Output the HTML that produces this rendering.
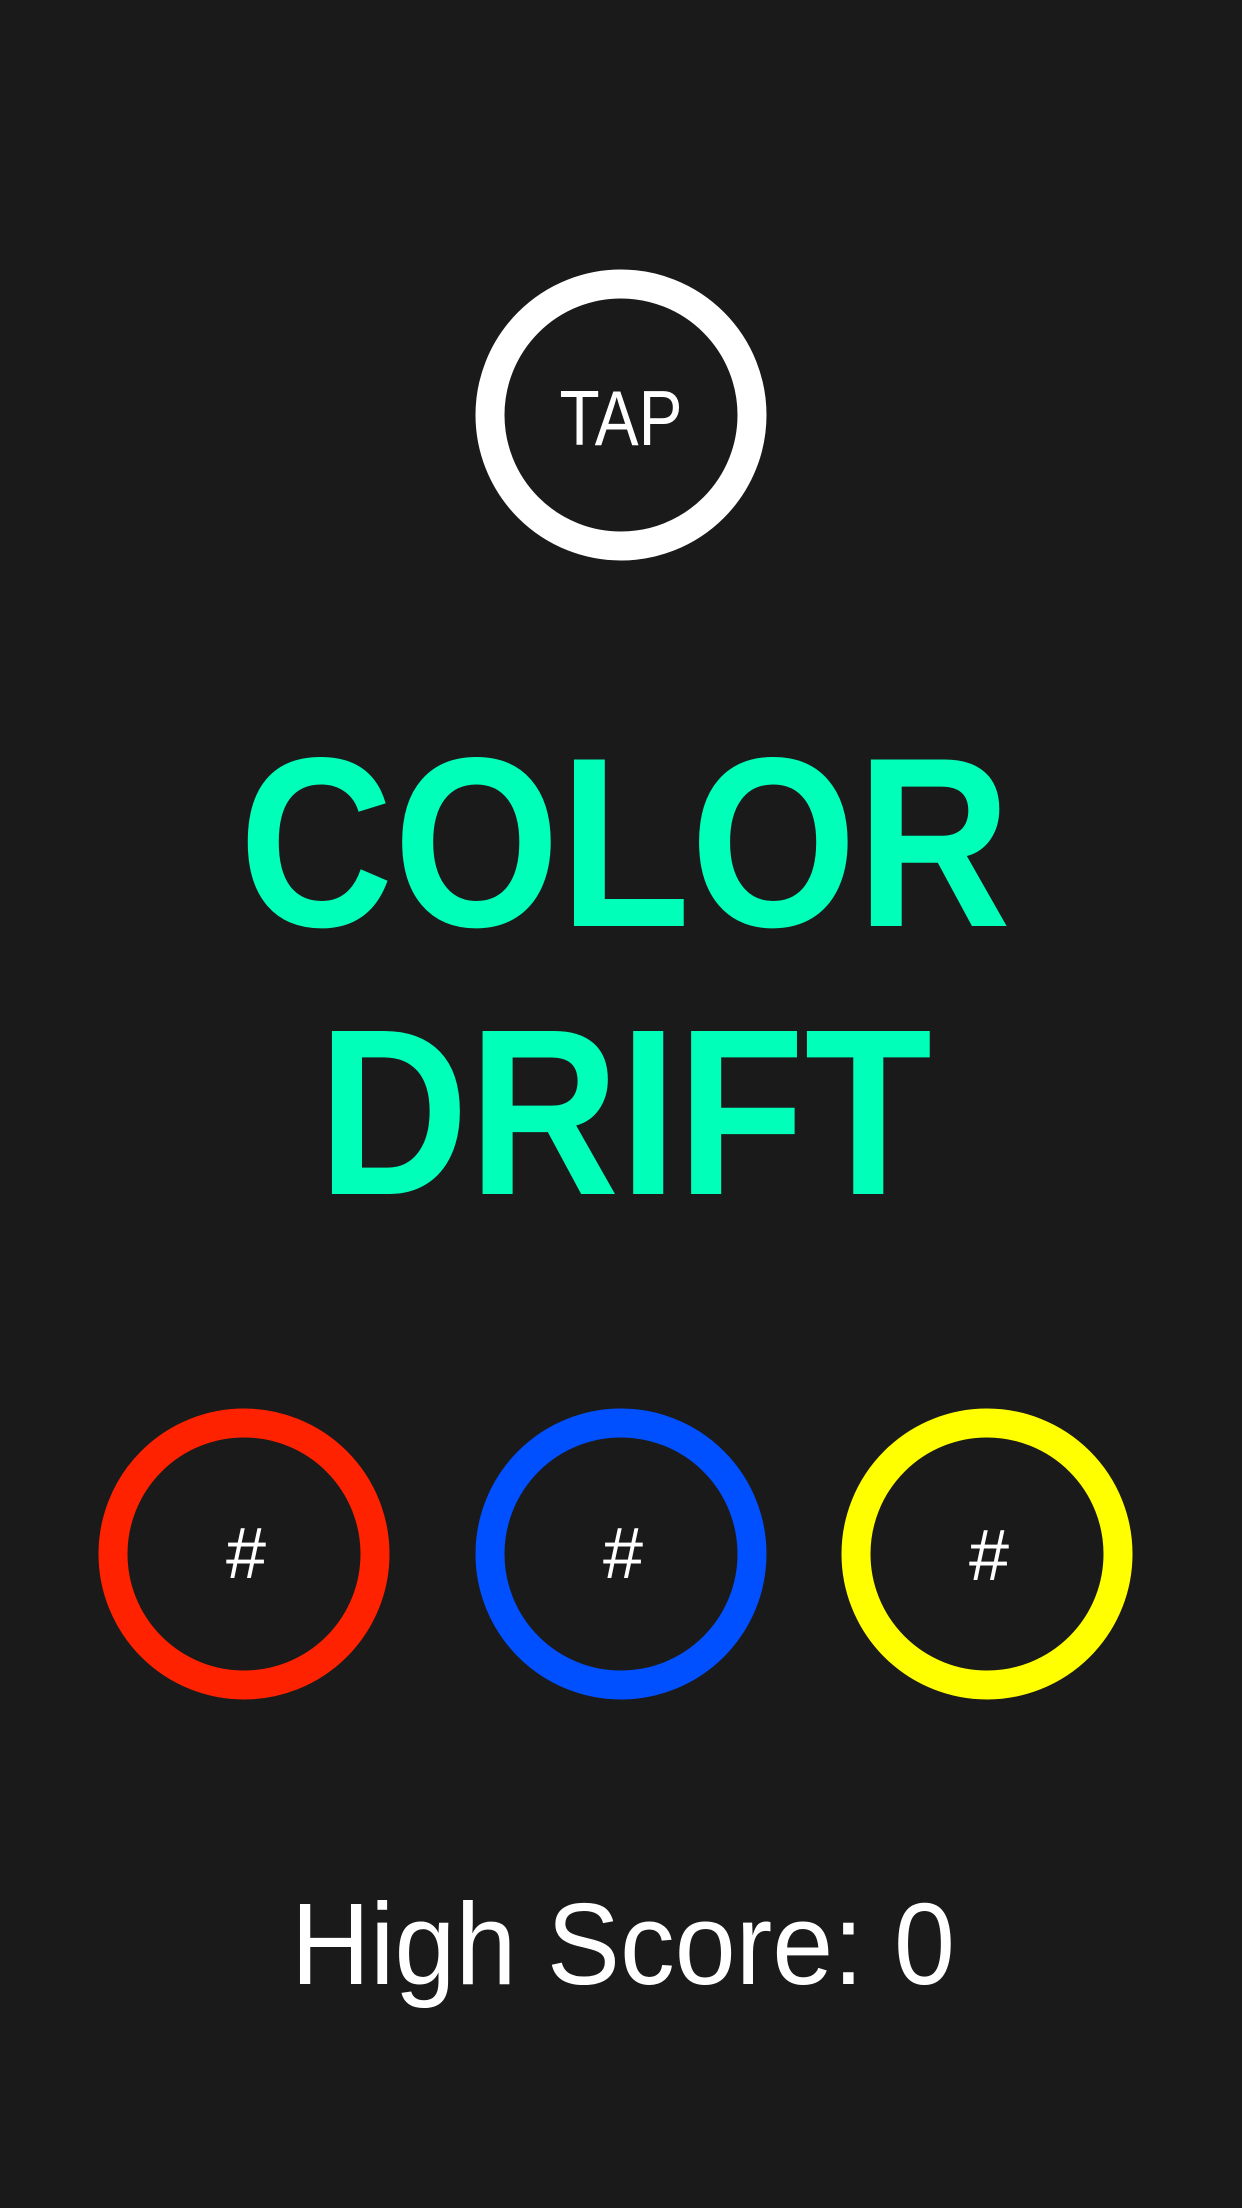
<!DOCTYPE html>
<html><head><meta charset="utf-8"><style>
html,body{margin:0;padding:0;background:#1a1a1a;}
svg{display:block}
</style></head><body>
<svg width="1242" height="2208" viewBox="0 0 1242 2208" xmlns="http://www.w3.org/2000/svg">
<rect width="1242" height="2208" fill="#1a1a1a"/>
<circle cx="621" cy="415" r="131" fill="none" stroke="#fff" stroke-width="29"/>
<text x="621" y="445" font-family="Liberation Sans, sans-serif" font-size="78" fill="#fff" text-anchor="middle" textLength="123" lengthAdjust="spacingAndGlyphs">TAP</text>
<g font-family="Liberation Sans, sans-serif" font-weight="bold" fill="#00ffb8">
<text x="239" y="926" font-size="242" textLength="772" lengthAdjust="spacingAndGlyphs">COLOR</text>
<text x="318" y="1194" font-size="237" textLength="614" lengthAdjust="spacingAndGlyphs">DRIFT</text>
</g>
<circle cx="244" cy="1554" r="131" fill="none" stroke="#ff2200" stroke-width="29"/>
<circle cx="621" cy="1554" r="131" fill="none" stroke="#0050ff" stroke-width="29"/>
<circle cx="987" cy="1554" r="131" fill="none" stroke="#ffff00" stroke-width="29"/>
<g font-family="Liberation Sans, sans-serif" font-size="72" fill="#fff" text-anchor="middle">
<text x="246" y="1578">#</text>
<text x="623" y="1578">#</text>
<text x="989" y="1580">#</text>
</g>
<text x="291" y="1984" font-family="Liberation Sans, sans-serif" font-size="116" fill="#fff" textLength="664" lengthAdjust="spacingAndGlyphs">High Score: 0</text>
</svg>
</body></html>
